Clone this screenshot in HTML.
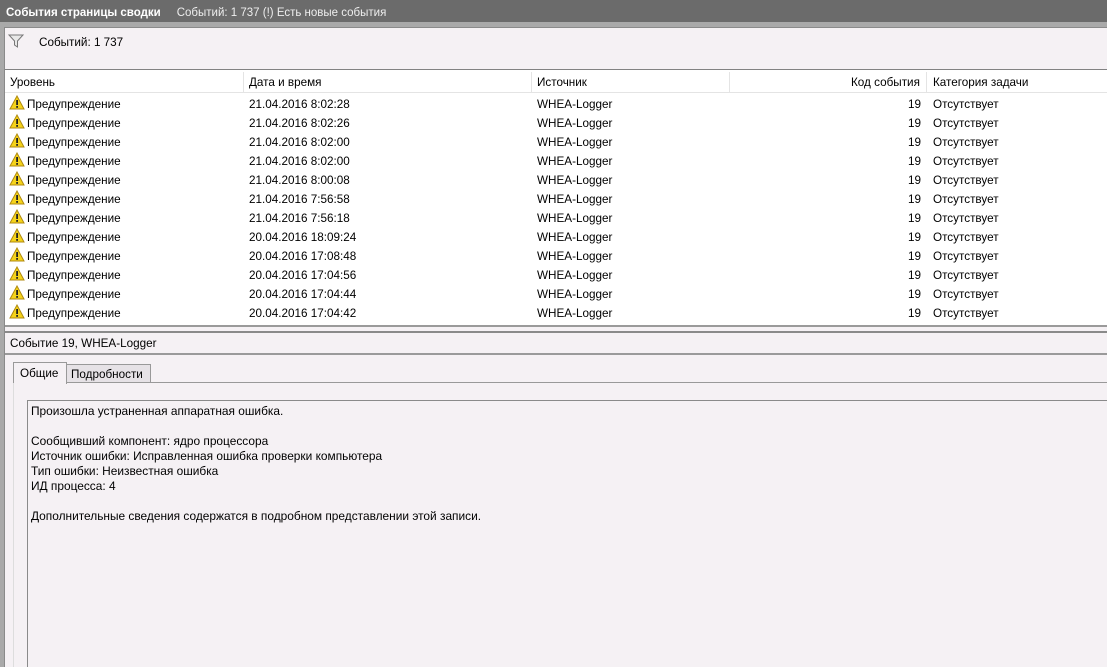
<!DOCTYPE html><html><head><meta charset="utf-8"><style>
*{margin:0;padding:0;box-sizing:border-box}
body{width:1107px;height:667px;overflow:hidden;background:#a9a9a9;font-family:"Liberation Sans","DejaVu Sans",sans-serif;font-size:11.7px;color:#000;position:relative}
.a{position:absolute;white-space:nowrap}
.title{left:0;top:0;width:1107px;height:22px;background:#6b6b6b;color:#fff;font-size:11.5px;line-height:26px;padding-left:6px}
.title b{font-weight:bold;margin-right:16px}
.title span{color:#eee}
.row{position:absolute;left:6px;width:1101px;height:19px;line-height:19px}
.row span{position:absolute;top:1px}
</style></head><body>
<div class="a title"><b>События страницы сводки</b><span>Событий: 1 737 (!) Есть новые события</span></div>
<div class="a" style="left:4px;top:27px;width:1103px;height:640px;background:#f5f1f4;border-left:1px solid #8a8a8a;border-top:1px solid #8a8a8a"></div>
<svg class="a" style="left:8px;top:34px" width="16" height="14" viewBox="0 0 16 14"><path d="M1 1H15L9.5 7V13L6.5 11V7Z" fill="#e8e8e8" stroke="#777"/></svg>
<div class="a" style="left:39px;top:36px">Событий: 1 737</div>
<div class="a" style="left:5px;top:69px;width:1102px;height:256px;background:#fff;border-top:1px solid #828282"></div>
<div class="a" style="left:5px;top:72px;width:1102px;height:21px;border-bottom:1px solid #e4e4e4;background:#fff"></div>
<div class="a" style="left:243px;top:72px;width:1px;height:20px;background:#e4e4e4"></div>
<div class="a" style="left:531px;top:72px;width:1px;height:20px;background:#e4e4e4"></div>
<div class="a" style="left:729px;top:72px;width:1px;height:20px;background:#e4e4e4"></div>
<div class="a" style="left:926px;top:72px;width:1px;height:20px;background:#e4e4e4"></div>
<div class="a" style="left:10px;top:76px">Уровень</div>
<div class="a" style="left:249px;top:76px">Дата и время</div>
<div class="a" style="left:537px;top:76px">Источник</div>
<div class="a" style="left:851px;top:76px">Код события</div>
<div class="a" style="left:933px;top:76px">Категория задачи</div>
<div id="rows"></div>
<div class="a" style="left:5px;top:325px;width:1102px;height:2px;background:#9a9a9a"></div>
<div class="a" style="left:5px;top:331px;width:1102px;height:2px;background:#8a8a8a"></div>
<div class="a" style="left:10px;top:337px">Событие 19, WHEA-Logger</div>
<div class="a" style="left:5px;top:353px;width:1102px;height:2px;background:#9a9a9a"></div>
<div class="a" style="left:13px;top:382px;width:1094px;height:1px;background:#999"></div>
<div class="a" style="left:13px;top:362px;width:54px;height:22px;background:#f5f1f4;border:1px solid #999;border-bottom:none;padding:4px 0 0 6px">Общие</div>
<div class="a" style="left:67px;top:364px;width:84px;height:19px;background:#e6e2e6;border:1px solid #999;border-left:none;padding:3px 0 0 4px">Подробности</div>
<div class="a" style="left:13px;top:383px;width:1px;height:284px;background:#ddd"></div>
<div class="a" style="left:27px;top:400px;width:1080px;height:267px;border:1px solid #8a8a8a;border-right:none;border-bottom:none;line-height:15px;padding:3px 0 0 3px;white-space:normal;font-size:11.9px">Произошла устраненная аппаратная ошибка.<br><br>Сообщивший компонент: ядро процессора<br>Источник ошибки: Исправленная ошибка проверки компьютера<br>Тип ошибки: Неизвестная ошибка<br>ИД процесса: 4<br><br>Дополнительные сведения содержатся в подробном представлении этой записи.</div>
<script>
var d=["21.04.2016 8:02:28","21.04.2016 8:02:26","21.04.2016 8:02:00","21.04.2016 8:02:00","21.04.2016 8:00:08","21.04.2016 7:56:58","21.04.2016 7:56:18","20.04.2016 18:09:24","20.04.2016 17:08:48","20.04.2016 17:04:56","20.04.2016 17:04:44","20.04.2016 17:04:42"];
var h="";d.forEach(function(t,i){h+='<div class="row" style="top:'+(94+i*19)+'px"><svg style="position:absolute;left:3px;top:1px" width="16" height="15" viewBox="0 0 16 15"><path d="M8 1L15 14H1Z" fill="#f5d31a" stroke="#b08a10"/><rect x="7.2" y="5" width="1.8" height="5" fill="#222"/><rect x="7.2" y="11" width="1.8" height="1.8" fill="#222"/></svg><span style="left:21px">Предупреждение</span><span style="left:243px">'+t+'</span><span style="left:531px">WHEA-Logger</span><span style="left:902px">19</span><span style="left:927px">Отсутствует</span></div>'});
document.getElementById("rows").outerHTML=h;
</script>
</body></html>
